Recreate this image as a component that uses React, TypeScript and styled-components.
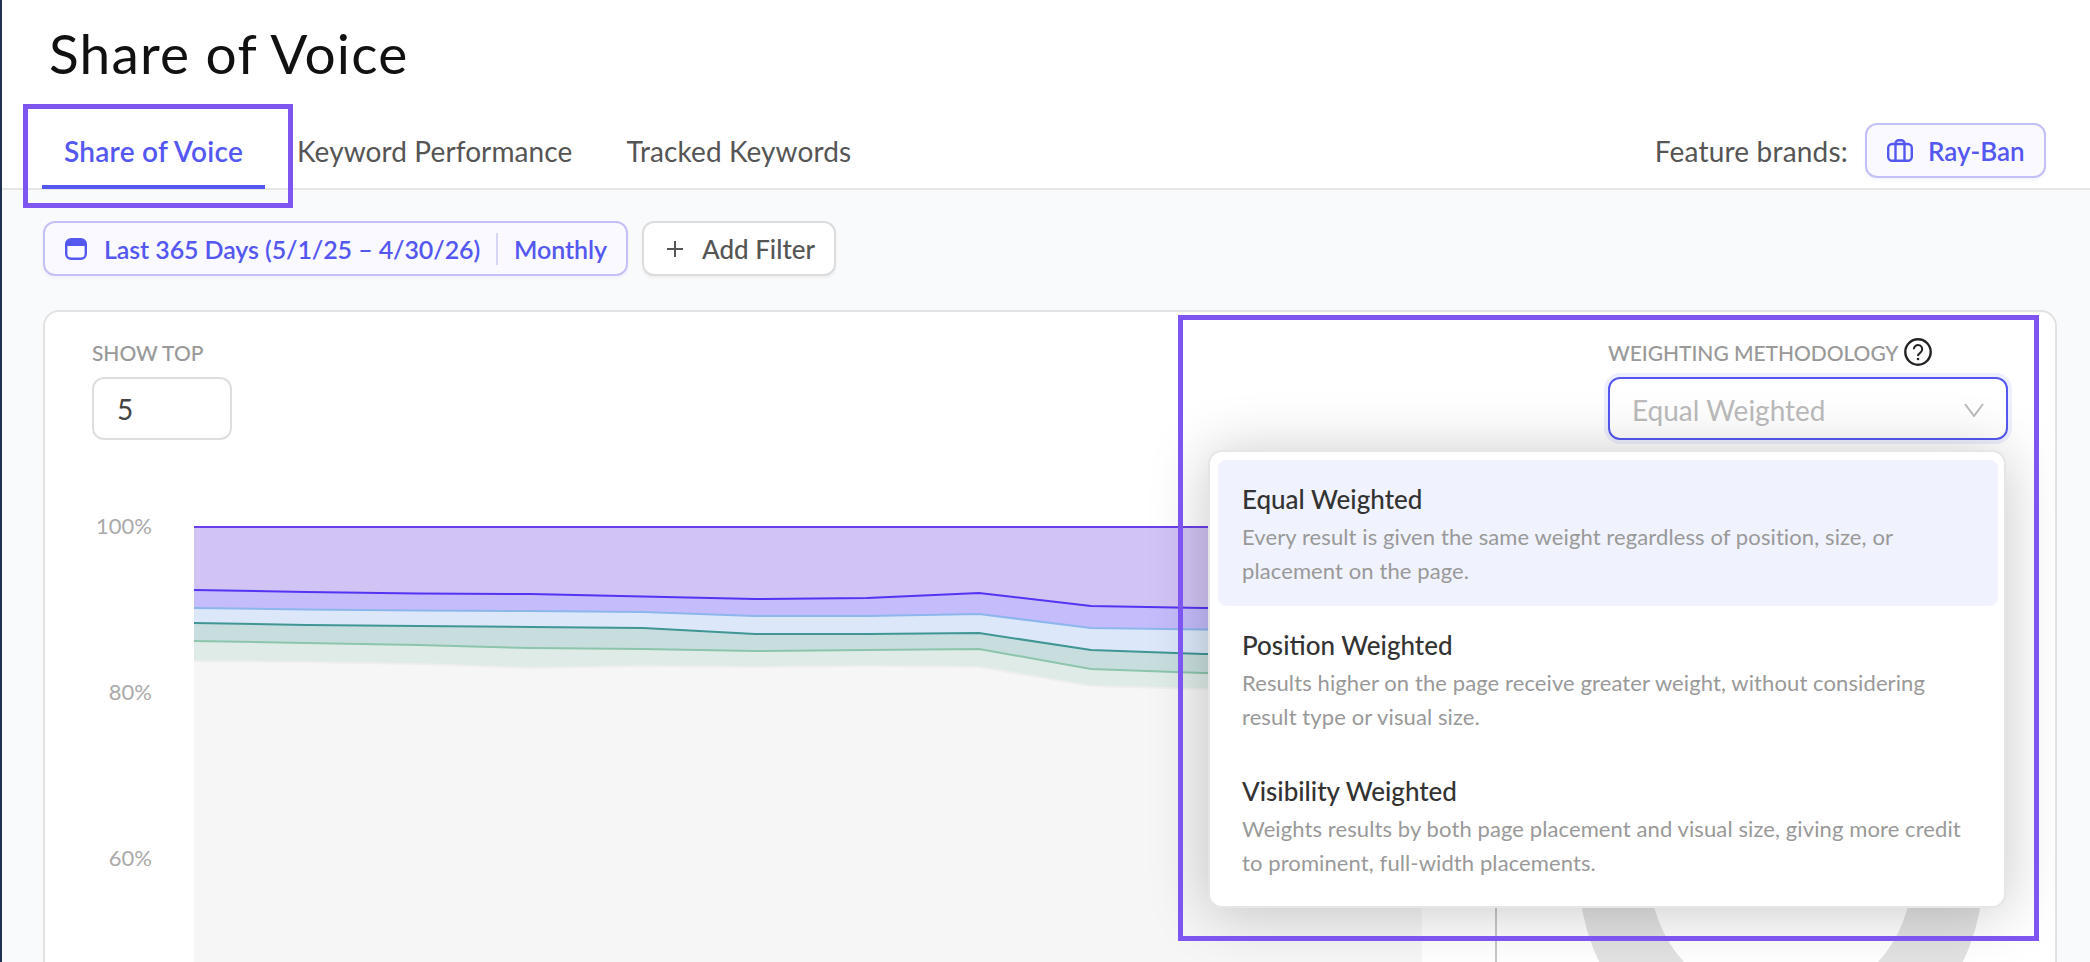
import styled, { createGlobalStyle } from 'styled-components';

const GlobalStyle = createGlobalStyle`
    html, body {
        margin: 0;
        padding: 0;
        background: #f9fafc;
    }

    * {
        box-sizing: border-box;
    }

    svg {
        flex: none;
    }
`;

const Page = styled.div`
    width: 2090px;
    height: 962px;
    overflow: hidden;
    border-left: 2px solid #1f3050;
    background: #f9fafc;
    font-family: 'Lato', 'Liberation Sans', sans-serif;
`;

const Header = styled.header`
    height: 190px;
    display: flex;
    flex-direction: column;
    justify-content: space-between;
    background: #fff;
    border-bottom: 2px solid #e6e6e6;
`;

const Title = styled.h1`
    margin: 22px 0 0 47px;
    font-size: 55px;
    line-height: 62px;
    font-weight: 400;
    letter-spacing: 1.2px;
    color: #111;
`;

const TabBar = styled.div`
    display: flex;
    align-items: flex-end;
    gap: 10px;
    padding: 0 44px 0 40px;
`;

const Tab = styled.div<{ $active?: boolean }>`
    position: relative;
    height: 59px;
    padding: 0 22px;
    margin-bottom: -1px;
    font-size: 28px;
    line-height: 43px;
    font-weight: ${(p) => (p.$active ? 600 : 400)};
    letter-spacing: ${(p) => (p.$active ? '0.25px' : '0.1px')};
    white-space: nowrap;
    color: ${(p) => (p.$active ? '#5558f0' : '#555')};
    border-bottom: 4px solid ${(p) => (p.$active ? '#5558f0' : 'transparent')};
`;

const Highlight = styled.div`
    position: absolute;
    border: 5px solid #7f55f2;
    pointer-events: none;
`;

const TabHighlight = styled(Highlight)`
    left: -19px;
    top: -26px;
    width: 270px;
    height: 104px;
`;

const FeatureBrands = styled.div`
    margin-left: auto;
    margin-bottom: 10px;
    display: flex;
    align-items: center;
    gap: 17px;
    font-size: 28px;
    letter-spacing: 0.2px;
    color: #555;
`;

const BrandButton = styled.div`
    height: 55px;
    width: 181px;
    display: flex;
    align-items: center;
    gap: 15px;
    padding-left: 20px;
    border: 2px solid #c2c0f6;
    border-radius: 12px;
    background: #f9f9ff;
    box-shadow: 0 2px 3px rgba(85, 88, 240, 0.06);
    color: #5558f0;
    font-size: 26px;
    font-weight: 600;
    letter-spacing: 0;
`;

const FilterRow = styled.div`
    display: flex;
    gap: 14px;
    margin: 31px 0 0 41px;
`;

const DatePill = styled.div`
    width: 585px;
    height: 55px;
    display: flex;
    align-items: center;
    padding-left: 20px;
    border: 2px solid #c2c0f6;
    border-radius: 12px;
    background: #f9f9ff;
    box-shadow: 0 2px 3px rgba(85, 88, 240, 0.06);
    color: #5558f0;
    font-size: 25px;
    font-weight: 600;
    letter-spacing: -0.1px;
    white-space: nowrap;
`;

const DateText = styled.span`
    margin-left: 17px;
`;

const PillDivider = styled.span`
    width: 2px;
    height: 32px;
    margin: 0 16px;
    background: #d6d5f5;
`;

const AddFilter = styled.div`
    width: 194px;
    height: 55px;
    display: flex;
    align-items: center;
    gap: 19px;
    padding-left: 23px;
    border: 2px solid #dcdcdc;
    border-radius: 12px;
    background: #fff;
    box-shadow: 0 2px 3px rgba(0, 0, 0, 0.05);
    color: #555;
    font-size: 26px;
    font-weight: 500;
    white-space: nowrap;
`;

const Card = styled.section`
    position: relative;
    width: 2014px;
    height: 700px;
    margin: 34px 0 0 41px;
    padding-top: 26px;
    overflow: hidden;
    border: 2px solid #e2e2e2;
    border-radius: 16px;
    background: #fff;
`;

const Controls = styled.div`
    display: flex;
    justify-content: space-between;
    padding: 0 47px;
`;

const Field = styled.div`
    display: flex;
    flex-direction: column;
`;

const FieldLabel = styled.div`
    height: 28px;
    margin-bottom: 11px;
    display: flex;
    align-items: center;
    gap: 6px;
    font-size: 21px;
    font-weight: 500;
    letter-spacing: -0.05px;
    color: #999;
    text-transform: uppercase;
`;

const NumberBox = styled.div`
    width: 140px;
    height: 63px;
    padding-left: 23px;
    border: 2px solid #dedede;
    border-radius: 12px;
    font-size: 28px;
    line-height: 61px;
    color: #444;
`;

const Select = styled.div`
    width: 400px;
    height: 63px;
    display: flex;
    align-items: center;
    justify-content: space-between;
    padding: 2px 22px 0 22px;
    border: 2px solid #5558f0;
    border-radius: 12px;
    box-shadow: 0 0 0 4px #eeeffd;
    font-size: 28px;
    color: #bbb;
`;

const ChartRow = styled.div`
    display: flex;
    height: 460px;
    margin-top: 74px;
`;

const YAxis = styled.div`
    width: 149px;
    flex: none;
    padding-right: 42px;
    text-align: right;
`;

const YLabel = styled.div`
    height: 24px;
    margin-bottom: 141.9px;
    font-size: 22px;
    line-height: 24px;
    color: #aaa;
`;

const AreaSvg = styled.svg`
    width: 1228px;
    height: 460px;
    margin-top: 1px;
`;

const DonutPanel = styled.div`
    margin-left: 73px;
    flex: 1;
    border-left: 2px solid #c8c8c8;
`;

const DonutSvg = styled.svg`
    display: block;
    width: 560px;
    height: 460px;
`;

const Dropdown = styled.div`
    position: absolute;
    top: 138px;
    right: 49px;
    width: 798px;
    height: 458px;
    padding: 8px 6px 0 8px;
    border: 2px solid #e6e6e6;
    border-radius: 14px;
    background: #fff;
    box-shadow: 0 4px 60px rgba(0, 0, 0, 0.22);
`;

const Option = styled.div<{ $selected?: boolean }>`
    height: 146px;
    padding: 23px 24px 0;
    border-radius: 8px;
    background: ${(p) => (p.$selected ? '#f0f2fe' : 'transparent')};
`;

const OptionTitle = styled.div`
    font-size: 26px;
    line-height: 32px;
    font-weight: 500;
    color: #333;
`;

const OptionText = styled.div`
    margin-top: 5px;
    font-size: 22px;
    line-height: 34px;
    letter-spacing: 0.1px;
    white-space: nowrap;
    color: #999;
`;

const WeightHighlight = styled(Highlight)`
    top: 3px;
    right: 16px;
    width: 861px;
    height: 626px;
`;

const nodes = [0, 112, 224, 337, 449, 561, 673, 785, 897, 1009, 1121, 1228];
const top = 12;

// y of each series at the nodes, in px from the top of the svg
const series = [
    { line: '#5433f2', fill: '#d2c3f5', y: [75, 77, 78.5, 79, 81.5, 84, 83, 78, 91, 93, 93, 93] },
    { line: '#8db6ec', fill: '#c5bcfb', y: [93, 94.5, 95.5, 96, 97, 101, 101, 99, 113, 114.5, 114.5, 114.5] },
    { line: '#409595', fill: '#dce8f9', y: [108, 110, 111, 112, 113, 119, 119, 118, 135, 139, 139, 139] },
    { line: '#8cc5ac', fill: '#c8dede', y: [126, 128, 130, 133, 134, 136, 135, 134, 154, 158, 158, 158] },
    { line: '#eeeeee', fill: '#deebe7', y: [146, 147, 149, 153, 151, 152, 151, 152, 171, 174, 174, 174] },
];

const toLine = (ys: number[]) => ys.map((y, i) => `${nodes[i]},${y}`).join(' ');

const toBand = (upper: number[], lower: number[]) =>
    `${toLine(upper)} ${lower.map((y, i) => `${nodes[i]},${y}`).reverse().join(' ')}`;

function AreaChart() {
    const topLine = nodes.map(() => top);

    return (
        <AreaSvg viewBox="0 0 1228 460">
            <polygon points={toBand(series[4].y, nodes.map(() => 460))} fill="#f6f6f6" />
            {series.map((s, i) => (
                <polygon key={s.line} points={toBand(i === 0 ? topLine : series[i - 1].y, s.y)} fill={s.fill} />
            ))}
            <polyline points={toLine(topLine)} fill="none" stroke="#6a3fe8" strokeWidth="2" />
            {series.map((s) => (
                <polyline key={s.line} points={toLine(s.y)} fill="none" stroke={s.line} strokeWidth="2" />
            ))}
        </AreaSvg>
    );
}

function CalendarIcon() {
    return (
        <svg width="22" height="22" viewBox="0 0 22 22">
            <rect x="1.2" y="1.2" width="19.6" height="19.6" rx="5" fill="none" stroke="#5558f0" strokeWidth="2.4" />
            <path d="M1.2 8V6.2a5 5 0 0 1 5-5h9.6a5 5 0 0 1 5 5V8z" fill="#5558f0" />
        </svg>
    );
}

function BriefcaseIcon() {
    return (
        <svg width="26" height="23" viewBox="0 0 26 23" fill="none" stroke="#5558f0" strokeWidth="2.4">
            <rect x="1.2" y="5" width="23.6" height="16.8" rx="4" />
            <path d="M8.5 21.5V4.5a3.3 3.3 0 0 1 3.3-3.3h2.4a3.3 3.3 0 0 1 3.3 3.3v17" />
        </svg>
    );
}

function PlusIcon() {
    return (
        <svg width="16" height="16" viewBox="0 0 16 16" stroke="#555" strokeWidth="2">
            <path d="M8 0v16M0 8h16" />
        </svg>
    );
}

function HelpIcon() {
    return (
        <svg width="28" height="28" viewBox="0 0 28 28" fill="none" stroke="#222">
            <circle cx="14" cy="14" r="12.7" strokeWidth="2.4" />
            <path d="M9.8 11.2a4.2 4.2 0 1 1 6.6 3.4c-1.6 1.1-2.4 1.7-2.4 3.4" strokeWidth="2" />
            <circle cx="14" cy="21" r="1.3" fill="#222" stroke="none" />
        </svg>
    );
}

function ChevronIcon() {
    return (
        <svg width="20" height="14" viewBox="0 0 20 14" fill="none" stroke="#bbb" strokeWidth="2">
            <path d="M1 1l9 12 9-12" />
        </svg>
    );
}

const options = [
    {
        title: 'Equal Weighted',
        lines: ['Every result is given the same weight regardless of position, size, or', 'placement on the page.'],
    },
    {
        title: 'Position Weighted',
        lines: ['Results higher on the page receive greater weight, without considering', 'result type or visual size.'],
    },
    {
        title: 'Visibility Weighted',
        lines: ['Weights results by both page placement and visual size, giving more credit', 'to prominent, full-width placements.'],
    },
];

export default function App() {
    return (
        <Page>
            <GlobalStyle />
            <Header>
                <Title>Share of Voice</Title>
                <TabBar>
                    <Tab $active>
                        Share of Voice
                        <TabHighlight />
                    </Tab>
                    <Tab>Keyword Performance</Tab>
                    <Tab>Tracked Keywords</Tab>
                    <FeatureBrands>
                        Feature brands:
                        <BrandButton>
                            <BriefcaseIcon />
                            Ray-Ban
                        </BrandButton>
                    </FeatureBrands>
                </TabBar>
            </Header>
            <FilterRow>
                <DatePill>
                    <CalendarIcon />
                    <DateText>Last 365 Days (5/1/25 – 4/30/26)</DateText>
                    <PillDivider />
                    Monthly
                </DatePill>
                <AddFilter>
                    <PlusIcon />
                    Add Filter
                </AddFilter>
            </FilterRow>
            <Card>
                <Controls>
                    <Field>
                        <FieldLabel>Show Top</FieldLabel>
                        <NumberBox>5</NumberBox>
                    </Field>
                    <Field>
                        <FieldLabel>
                            Weighting Methodology
                            <HelpIcon />
                        </FieldLabel>
                        <Select>
                            Equal Weighted
                            <ChevronIcon />
                        </Select>
                    </Field>
                </Controls>
                <ChartRow>
                    <YAxis>
                        <YLabel>100%</YLabel>
                        <YLabel>80%</YLabel>
                        <YLabel>60%</YLabel>
                    </YAxis>
                    <AreaChart />
                    <DonutPanel>
                        <DonutSvg viewBox="0 0 560 460">
                            <circle cx="284" cy="360" r="166.5" fill="none" stroke="#e2e2e2" strokeWidth="71" />
                        </DonutSvg>
                    </DonutPanel>
                </ChartRow>
                <Dropdown>
                    {options.map((o, i) => (
                        <Option key={o.title} $selected={i === 0}>
                            <OptionTitle>{o.title}</OptionTitle>
                            <OptionText>
                                {o.lines[0]}
                                <br />
                                {o.lines[1]}
                            </OptionText>
                        </Option>
                    ))}
                </Dropdown>
                <WeightHighlight />
            </Card>
        </Page>
    );
}
